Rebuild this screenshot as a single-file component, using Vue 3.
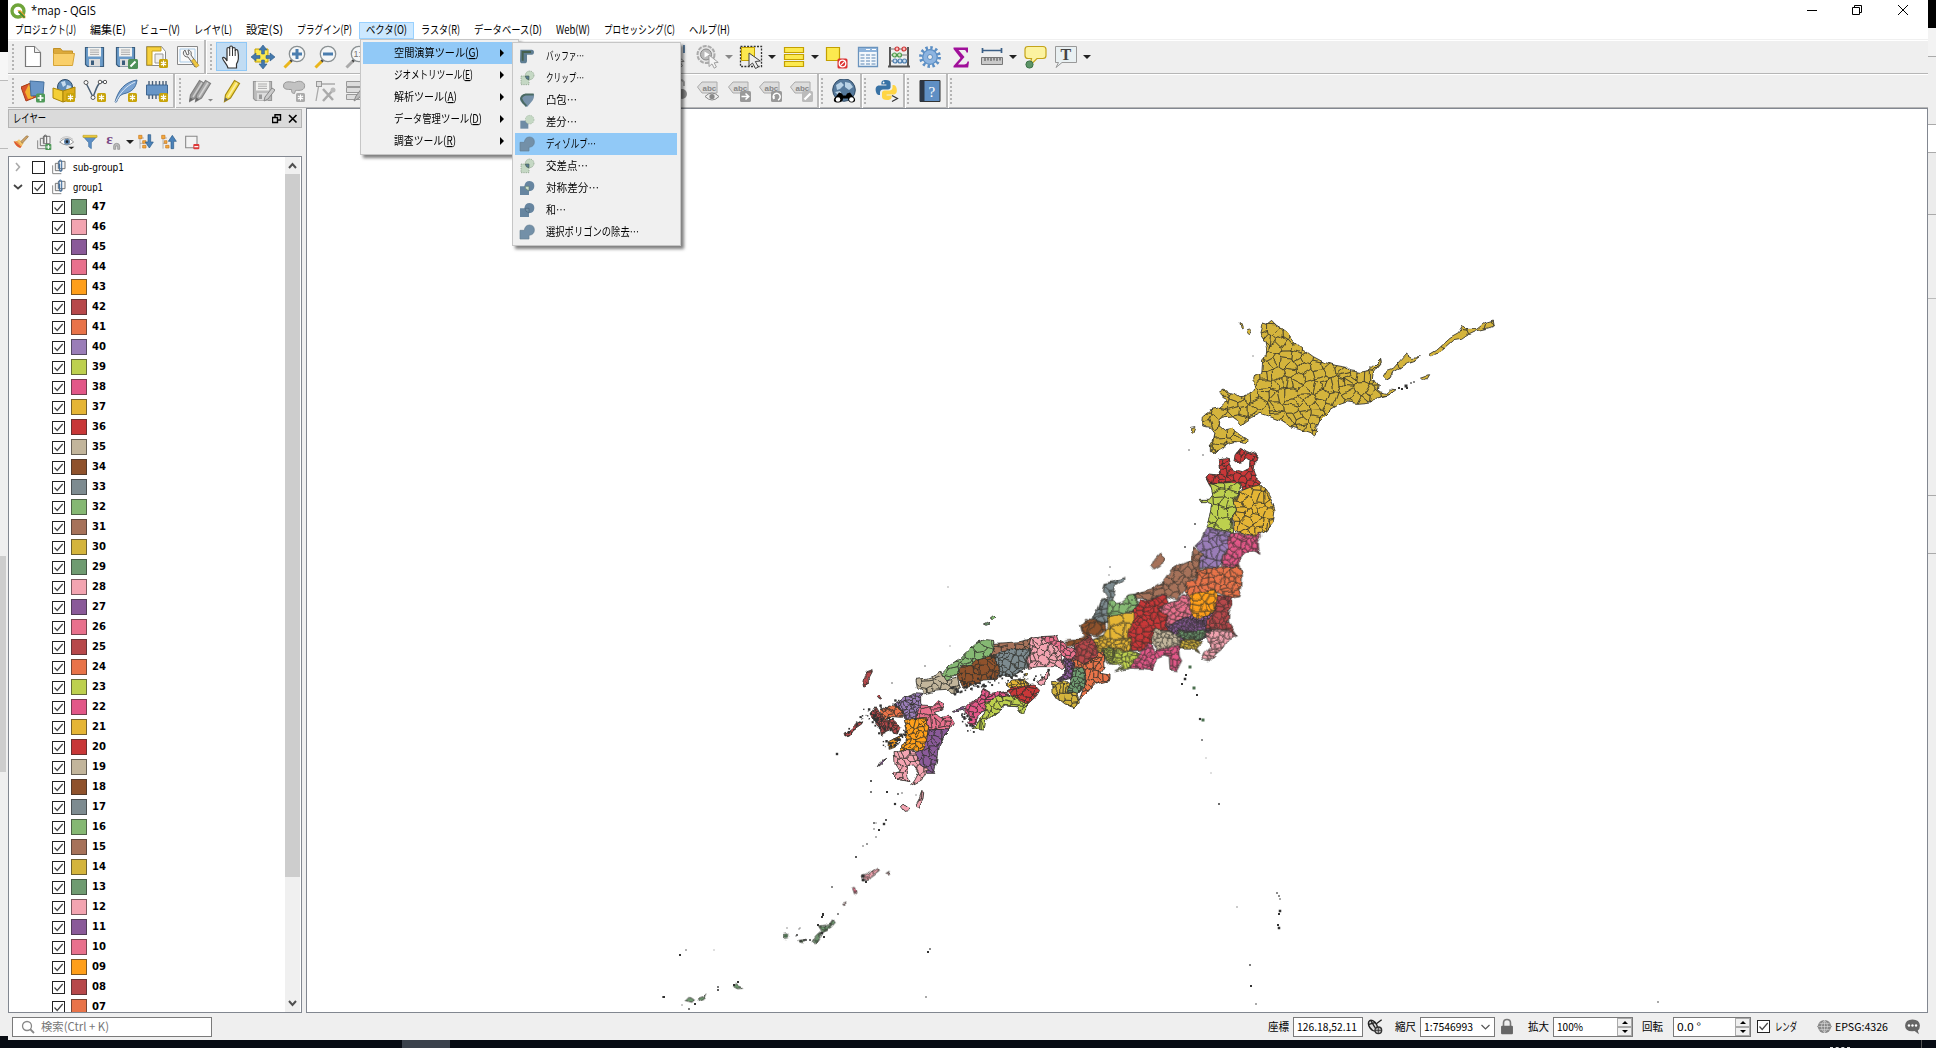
<script setup>
import { h } from 'vue'

const Txt = (p) => {
  const size = p.size || 12
  return h('svg', { width: p.w, height: 16, viewBox: `0 0 ${p.w} 16`, style: 'display:block;overflow:visible;flex:none' }, [
    h('text', {
      x: 0, y: p.y || 12, textLength: p.w, lengthAdjust: 'spacingAndGlyphs', 'font-size': size,
      'font-weight': p.weight || 400, fill: p.fill || '#000',
      'font-family': p.family || '"Noto Sans CJK JP", sans-serif',
    }, p.key2 ? [p.s + '(', h('tspan', { 'text-decoration': 'underline' }, p.key2), ')'] : p.s),
  ])
}
Txt.props = ['s', 'w', 'size', 'weight', 'fill', 'family', 'y', 'key2']

const menus = [
  ['プロジェクト(J)', 61], ['編集(E)', 36], ['ビュー(V)', 40], ['レイヤ(L)', 38], ['設定(S)', 37], ['プラグイン(P)', 55],
  ['ベクタ(O)', 41], ['ラスタ(R)', 39], ['データベース(D)', 68], ['Web(W)', 34], ['プロセッシング(C)', 71], ['ヘルプ(H)', 41],
]
const vectorMenu = [['空間演算ツール', 'G', 85], ['ジオメトリツール', 'E', 79], ['解析ツール', 'A', 63], ['データ管理ツール', 'D', 88], ['調査ツール', 'R', 62]]
const geoMenu = [
  ['バッファ…', 38, 'buffer'], ['クリップ…', 38, 'clip'], ['凸包…', 31, 'hull'], ['差分…', 31, 'diff'], ['ディゾルブ…', 50, 'dissolve'],
  ['交差点…', 42, 'clip'], ['対称差分…', 53, 'symdiff'], ['和…', 20, 'union'], ['選択ポリゴンの除去…', 93, 'dissolve'],
]

const star = '<rect x="14" y="14" width="9" height="9" rx="1.5" fill="#c8a40a"/><path d="M18.500 15.500v6M15.900 17l5.200 3M15.900 20l5.200-3" stroke="#fff" stroke-width="1.200"/>'
const gstar = '<rect x="14" y="14" width="9" height="9" rx="1.500" fill="#aaa"/><path d="M18.500 15.500v6M15.900 17l5.200 3M15.900 20l5.200-3" stroke="#fff" stroke-width="1.200"/>'
const lens = (c, i) => `<path d="M9 16 2.500 22.500" stroke="${c}" stroke-width="3"/><path d="M10.500 14.500 8.500 16.500" stroke="#444" stroke-width="2.500"/><circle cx="15" cy="9" r="7.700" fill="#f4f6f7" stroke="#8a9092" stroke-width="1.300"/>${i}`
const disk = (a, b) => `<path d="M2.500 2.500h18v19h-16l-2-2z" fill="${a}" stroke="${b}" stroke-width="1.200"/><rect x="5" y="2.500" width="13" height="9" fill="#f2f2f0"/><path d="M7 5h9M7 7.200h9M7 9.400h9" stroke="#aaa" stroke-width="1"/><rect x="6" y="14" width="11" height="7.500" fill="#ddd"/><rect x="8" y="15.500" width="3" height="4.500" fill="${b}"/>`
const tag = (x) => `<path d="M1.500 8 6 3h15v11H6z" fill="#ddd" stroke="#aaa"/><text x="6.500" y="11.500" font-size="8" font-weight="700" font-family="Liberation Sans, sans-serif" fill="#888">abc</text>${x}`
const cursor = (f, s) => `<path d="M10 9v11.500l3-2.600 2.200 4.300 2.200-1.200-2.200-4.200 4-.4z" fill="${f}" stroke="${s}" stroke-width=".9"/>`
const pen = (f, s) => `<path d="M4.500 22.500l1-6.500L14.500 1.500l5 3-9 14.500z" fill="${f}" stroke="${s}" stroke-width="1.200"/><path d="M4.500 22.500l.7-4 3 1.800z" fill="#666"/><path d="M17 3.500 8 18" stroke="#fff" stroke-opacity=".5" stroke-width="1.500"/>`
const sq = '<path d="M2 10h12v12H2z"'
const icons = {
  new: '<path d="M4.500 1.500h9l6 6v14h-15z" fill="#fff" stroke="#777" stroke-width="1.200"/><path d="M13.500 1.500v6h6" fill="#eee" stroke="#777"/>',
  open: '<path d="M1.500 3.500h7l2 2.500h10v4H1.500z" fill="#dca93a" stroke="#c08f25"/><path d="M1.500 20.500V8.500h21l-2 12z" fill="#f9cf6a" stroke="#d5a437"/>',
  save: disk('#6a9bc9', '#3b5d7d'),
  saveas: disk('#6a9bc9', '#3b5d7d') + '<rect x="14" y="14" width="10" height="10" rx="1.500" fill="#4e8f57"/><path d="M16.500 21.500l5-5" stroke="#fff" stroke-width="2"/>',
  layout: '<path d="M1.500 1.500h15l4 5v14h-19z" fill="#fff" stroke="#888"/><path d="M2 2h14v4H7v14H2z" fill="#f6d13e" stroke="#c9a31b"/><path d="M10 9h8v9h-8z" fill="#eee" stroke="#999"/>' + star,
  style: '<path d="M1.500 1.500h20v18h-20z" fill="#fafafa" stroke="#888"/><path d="M4 4h15v13H4z" fill="none" stroke="#a9cbe8"/><path d="M9 5c-3 2-2 7 3 7l7 10 3-2-7-10c1-3-1-5-3-5l1 4-2 1z" fill="#eee" stroke="#666"/><path d="M15.500 15.500l4.500 7 3-2-5-6.500z" fill="#f0c840" stroke="#b08a20" stroke-width=".6"/>',
  hand: '<path d="M8 23c-1-4-5-7-5.500-10 1-1.500 3 0 4.500 3V4c0-2 2.500-2 2.700 0V2.500c0-2 2.800-2 2.800 0V4c0-2 2.700-2 2.700 0v2c.3-2 2.700-1.600 2.700.3C19 12 18.500 16 16.500 19v4z" fill="#fff" stroke="#333" stroke-width="1.200"/><path d="M9.700 4v7M12.500 4v7M15.200 5.500V11" stroke="#333"/>',
  pansel: '<path d="M4 4h13v13H4z" fill="#fce94f" stroke="#c4a000"/><path d="M12 0l4 5h-2.600v4h-2.800V5H8zM12 24l4-5h-2.600v-4h-2.800v4H8zM0 12l5-4v2.600h4v2.800H5V16zM24 12l-5-4v2.600h-4v2.800h4V16z" fill="#4479ad" stroke="#2f5c88" stroke-width=".6"/>',
  zin: lens('#eab61c', '<path d="M15 4v10M10 9h10" stroke="#4a7dae" stroke-width="3"/>'),
  zout: lens('#eab61c', '<path d="M10 9h10" stroke="#4a7dae" stroke-width="3"/>'),
  znat: lens('#aaa', '<text x="9.500" y="12" font-size="9" font-family="Liberation Sans, sans-serif" fill="#777">1:</text>'),
  arrow: '<path d="M19 0v8" stroke="#2f5c88" stroke-width="1.500"/>' + cursor('#fff', '#777'),
  action: '<circle cx="10" cy="9.500" r="8.500" fill="#e6e6e6" stroke="#aaa" stroke-width="2" stroke-dasharray="4 1.200"/><circle cx="10" cy="9.500" r="5.500" fill="#bbb" stroke="#888"/><path d="M8.500 6.500v6l5-3z" fill="#fff"/><g transform="translate(3 1)">' + cursor('#f5f5f5', '#999') + '</g>',
  select: '<path d="M1.500 1.500h21v20h-21z" fill="none" stroke="#333" stroke-width="1.300" stroke-dasharray="2 1.300"/><path d="M2.500 2.500h13v13h-13z" fill="#fce94f" stroke="#c4a000"/><path d="M10 8v13l3.500-3 3 5.500 2.800-1.500-3-5.500 5-.5z" fill="#eee" stroke="#444"/>',
  selall: '<path d="M2.500 2.500h19v5h-19zM2.500 9.500h19v5h-19zM2.500 16.500h19v5h-19z" fill="#fce94f" stroke="#c4a000" stroke-width="1.200"/>',
  desel: '<path d="M1.500 2.500h13v13h-13z" fill="#fce94f" stroke="#c4a000" stroke-width="1.200"/><rect x="12.500" y="13.500" width="10" height="10" rx="1.500" fill="#dc3030"/><circle cx="17.500" cy="18.500" r="3.300" fill="none" stroke="#fff" stroke-width="1.300"/><path d="M15.300 20.700l4.400-4.400" stroke="#fff" stroke-width="1.200"/>',
  table: '<path d="M2.500 2.500h19v19h-19z" fill="#f4f8fc" stroke="#6a93bd" stroke-width="1.300"/><path d="M3 3h18v4H3z" fill="#8fb4db"/><path d="M4.500 10h4M4.500 13h4M4.500 16h4M4.500 19h4M10 10h4M10 13h4M10 16h4M10 19h4M15.500 10h4M15.500 13h4M15.500 16h4M15.500 19h4" stroke="#5a86b3" stroke-width="1.200"/><path d="M10 4.500h4M16 4.500h4" stroke="#fff"/>',
  abacus: '<path d="M3 2v19M21 2v19M1 21.500h22" stroke="#555" stroke-width="2"/><path d="M3 4h18M3 10h18M3 16h18" stroke="#777"/><g stroke-width="1.200"><circle cx="10" cy="4" r="2" fill="#fbb" stroke="#c33"/><circle cx="17" cy="4" r="2" fill="#fbb" stroke="#c33"/><circle cx="7.500" cy="10" r="2" fill="#cfe8c0" stroke="#4d9a4d"/><circle cx="12.500" cy="10" r="2" fill="#cfe8c0" stroke="#4d9a4d"/><circle cx="8" cy="16" r="2" fill="#cfe0f2" stroke="#4a7dae"/><circle cx="13" cy="16" r="2" fill="#cfe0f2" stroke="#4a7dae"/><circle cx="17.500" cy="16" r="2" fill="#cfe0f2" stroke="#4a7dae"/></g>',
  gear: '<circle cx="12" cy="12" r="9.200" fill="none" stroke="#5b8ec4" stroke-width="3.500" stroke-dasharray="2.400 2.417"/><circle cx="12" cy="12" r="7.300" fill="#8db4e0" stroke="#5b8ec4" stroke-width="1.300"/><circle cx="12" cy="12" r="2.500" fill="#efefef" stroke="#5b8ec4"/>',
  sigma: '<path d="M4.500 2.500h14.500v5h-1.500c-.5-2-1-2.500-3-2.500H9.500l6 7-6.500 7.500h6c2 0 3-.8 3.500-3h1.500l-.8 6H4.500v-1.500L11.500 13 4.500 4z" fill="#a0109a"/>',
  measure: '<path d="M2.500 3v5M21.500 3v5M2 5.500h20" stroke="#3b5f86" stroke-width="1.700"/><path d="M1.500 12.500h21v7h-21z" fill="#c9c9c9" stroke="#777"/><path d="M5 13v3M8 13v2.500M11 13v3M14 13v2.500M17 13v3M20 13v2.500" stroke="#444"/>',
  tip: '<path d="M5 1.500h15q3 0 3 3v6q0 3-3 3h-6l-7 7 1.500-7H5q-3 0-3-3v-6q0-3 3-3z" fill="#fcf3a0" stroke="#c4a41a" stroke-width="1.200"/><circle cx="6.500" cy="19.500" r="3.600" fill="#5c9467" stroke="#3f7348"/>',
  ttext: '<path d="M1.500 1.500h21v16H8l-6 5 2.500-5h-3z" fill="#e9f0f2" stroke="#999"/><text x="6.500" y="15" font-size="16" font-weight="700" font-family="Liberation Serif, serif" fill="#444">T</text>',
  addlayer: '<path d="M1 8l11-5 6 11-11 6z" fill="#f2c230" stroke="#b98a12"/><path d="M0 8l10-4 5 14-10 4z" fill="#d9542c" stroke="#a93c1b"/><path d="M4 13l4-8 4 14-5 1z" fill="#f2b030"/><path d="M9 2l14 1-1 13-12 1z" fill="#6a96c8" stroke="#44709e"/><rect x="15" y="14.500" width="9" height="9" rx="1.500" fill="#4f9a59"/><path d="M19.500 16v6M16.500 19h6" stroke="#fff" stroke-width="1.700"/>',
  geopkg: '<circle cx="13" cy="8" r="7.500" fill="#5f8cb8" stroke="#2e4c6b"/><path d="M9 3l4-1 1 4-3 2zM15 6l4 1-1 4-4-1z" fill="#c8dcee"/><path d="M1 9l10 3v11L1 19z" fill="#f4cf37" stroke="#a98508"/><path d="M11 12l12-4v11l-12 4z" fill="#ddae1c" stroke="#a98508"/>' + star,
  shp: '<path d="M3 4l7 14c3-7 4-13 8-15h3" fill="none" stroke="#4a6076" stroke-width="1.500"/><circle cx="3" cy="3.500" r="2" fill="#fff" stroke="#555"/><circle cx="10" cy="18.500" r="2" fill="#fff" stroke="#555"/><circle cx="17" cy="3" r="1.800" fill="#fff" stroke="#555"/><circle cx="22" cy="3" r="1.700" fill="#fff" stroke="#555"/>' + star,
  feather: '<path d="M1 23C4 12 10 3 23 1c-1 8-5 12-14 14-3 1-5 4-6.500 8z" fill="#7aa3d2" stroke="#456f9d"/><path d="M1.500 23C6 14 12 7 21 3" stroke="#dbe8f5" fill="none"/>' + star,
  chip: '<path d="M4 2v18M7.500 2v18M11 2v18M14.500 2v18M18 2v18M21 2v18" stroke="#4a5f77" stroke-width="1.400"/><path d="M1.500 6h21v10h-21z" fill="#6795c6" stroke="#3f6691"/>' + star,
  pens: '<g transform="translate(-4 0)">' + pen('#999', '#808080') + '</g><g transform="translate(2 0)">' + pen('#a8a8a8', '#808080') + '</g><path d="M19 20h5l-2.500 2.500z" fill="#888"/>',
  pen: pen('#f6dc4a', '#a68a12'),
  saveed: disk('#bcbcbc', '#999') + '<path d="M13 22l1-4 7-9 3 2-7 9z" fill="#ccc" stroke="#888"/>',
  blob: '<path d="M1.500 7c0-6 8-4 11-3.500 6-3 11 0 10 4.500s-7 3-9 3.500l-1 3c-3 0-3-2-3-4-4 0-8 0-8-3.500z" fill="#c2c2c2" stroke="#999"/>' + gstar,
  vertex: '<path d="M3 22 6 5h16" fill="none" stroke="#aaa" stroke-width="1.300"/><rect x="3.500" y="2.500" width="5" height="5" fill="#ddd" stroke="#999"/><path d="M10 10l10 11M21 10l-11 12" stroke="#aaa" stroke-width="2.500"/><circle cx="20" cy="11" r="2.500" fill="#bbb"/>',
  attr: '<path d="M2.500 2.500h17v5h-17zM2.500 8.500h17v5h-17zM2.500 15.500h17v5h-17z" fill="#ddd" stroke="#999"/><path d="M10 22l2-5 9-12 3 2-9 12z" fill="#bbb" stroke="#888"/>',
  lock2: '<path d="M13 5v-2q3-4 6 0v4" fill="none" stroke="#aaa" stroke-width="2"/><circle cx="17" cy="15" r="5" fill="#888"/>',
  tageye: tag('<path d="M9 17.500q7-7 14 0-7 7-14 0z" fill="#eee" stroke="#888"/><circle cx="16" cy="17.500" r="2.600" fill="#888"/>'),
  tagarr: tag('<rect x="13" y="12" width="11" height="11" rx="1.500" fill="#999"/><path d="M14.500 17.500h7M18.500 14.500l3.200 3-3.200 3" stroke="#fff" stroke-width="1.600" fill="none"/>'),
  tagrot: tag('<rect x="13" y="12" width="11" height="11" rx="1.500" fill="#999"/><path d="M16 20a3.500 3.500 0 1 1 4 1M16 20v-3" stroke="#fff" stroke-width="1.500" fill="none"/>'),
  tagpen: tag('<rect x="13" y="12" width="11" height="11" rx="1.500" fill="#bbb"/><path d="M15.500 20.500l6-6" stroke="#fff" stroke-width="2.300"/>'),
  search: '<circle cx="12" cy="11" r="11.300" fill="#55799c" stroke="#334d66"/><path d="M4 6l5-3 3 3-4 4-3 1zM13 3l5 1 3 4-4 3-4-3zM3 13l5-1 2 3-3 2z" fill="#b9d2e6"/><path d="M5 23.500c-4 0-4-4-1-6l3-4 3 1 1 2h3l1-2 3-1 3 4c3 2 3 6-1 6-3 0-4-2-4-4h-5c0 2-1 4-6 4z" fill="#000"/><circle cx="6" cy="20.500" r="2.300" fill="#fff"/><circle cx="19.500" cy="20.500" r="2.300" fill="#fff"/>',
  python: '<path d="M11 1c-5 0-4.600 2.200-4.600 4.500h5v1H4.500C1 6.500 0 9 1 13c.6 2.500 2 3 4 3v-2.500c0-2 1.500-3 3-3h5c1.500 0 2.600-1 2.600-2.500V4C15.600 2 14 1 11 1z" fill="#3872a5"/><circle cx="8.600" cy="3.500" r=".9" fill="#fff"/><path d="M12 21c5 0 4.600-2.200 4.600-4.500h-5v-.9H18c3.500 0 4.500-2.500 3.500-6.500-.6-2.500-2-3-4-3v2.500c0 2-1.500 3-3 3h-5C8 11.600 7 12.600 7 14v4c0 2 2 3 5 3z" fill="#ffd545"/><path d="M17 16.500l5.500 3-5.500 3" fill="none" stroke="#333" stroke-width="1.200"/>',
  help: '<path d="M2 1.500h20v21H2z" fill="#5f8fc4" stroke="#333"/><path d="M2 1.500h4.500v21H2z" fill="#2c3746"/><text x="10.500" y="17.500" font-size="15" font-family="Liberation Serif, serif" fill="#fff">?</text>',
  buffer: '<path d="M2 2.500h17q3.500 0 3.500 4T19 10h-7v9q0 4-4 4H5q-3.500 0-3.500-4z" fill="#5f7e93"/><path d="M5.500 19V6H18" fill="none" stroke="#46604e" stroke-width="3"/>',
  clip: '<path d="M3 9h12v13H3z" fill="#c5d8c4" stroke="#7d947d" stroke-dasharray="2 1.500"/><circle cx="16" cy="8" r="6.500" fill="#c5d8c4" stroke="#7d947d" stroke-dasharray="2 1.500"/><path d="M9.500 9H15v5.500q-5 0-5.500-5.500z" fill="#5a7b95" stroke="#4a6555"/>',
  hull: '<path d="M9 3h13.500q1 7-4 12l-6 7q-3 1-4-2Q1 14 1.500 10 3 4 9 3z" fill="#7792aa"/><path d="M22 3.800H10Q4 5 3.200 10q2 6 8 11" fill="none" stroke="#4b6a62" stroke-width="3"/>',
  diff: sq + ' fill="#6e8ca5"/><circle cx="16" cy="8.500" r="6.500" fill="#c5d8c4" stroke="#9cb29c" stroke-dasharray="2 1.500"/>',
  dissolve: '<path d="M1.500 9.500H8q1-8 8-8 7 .5 7 7.500t-8 8v5.500H1.500z" fill="#7390a8" stroke="#657f93"/>',
  symdiff: '<path d="M1.500 9.500H8q1-8 8-8 7 .5 7 7.500t-8 8v5.500H1.500z" fill="#6685a0"/><path d="M9 9.500h6V16q-6-1-6-6.500z" fill="#cfe0cc" stroke="#5a7a70"/>',
  union: '<path d="M1.500 9.500H8q1-8 8-8 7 .5 7 7.500t-8 8v5.500H1.500z" fill="#6685a0"/><path d="M9 9.500h6V16q-6-1-6-6.500z" fill="#7392a8" stroke="#48657b"/>',
  brush: '<path d="M1 11c4 1 6-1 8-3l7 6-5 7C6 20 3 16 1 11z" fill="#f3c66c"/><path d="M1 11c2 1 4 1 5 0l7 7-2 3C6 20 3 16 1 11z" fill="#dc5a34"/><path d="M4 11l8 7" stroke="#f5c050" stroke-width="1.500"/><path d="M12 11l8-8q2-1 3 1l-9 10z" fill="#d0a468" stroke="#8a6a3a"/>',
  group: '<path d="M2.500 9.500V22h13" fill="none" stroke="#888" stroke-width="1.500"/><path d="M6.500 6.500h10v11h-10z" fill="#eee" stroke="#777" stroke-width="1.500"/><path d="M11 3.500h10v11H11z" fill="#f4f4f4" stroke="#777" stroke-width="1.500"/><path d="M12 14V4q2-5 4 0v13q-1 3-3 0V7" fill="none" stroke="#44709e" stroke-width="1.600"/>',
  addgroup: '<path d="M2.500 9.500V22h13" fill="none" stroke="#888" stroke-width="1.500"/><path d="M6.500 6.500h10v11h-10z" fill="#eee" stroke="#777" stroke-width="1.500"/><path d="M11 3.500h10v11H11z" fill="#f4f4f4" stroke="#777" stroke-width="1.500"/><path d="M12 14V4q2-5 4 0v13" fill="none" stroke="#666" stroke-width="1.600"/><rect x="14" y="15" width="9" height="9" rx="1" fill="#4f9a59"/><path d="M18.500 16.500v6M15.500 19.500h6" stroke="#fff" stroke-width="1.600"/>',
  eye: '<path d="M1 12q11-11 21 0-10 9-21 0z" fill="#fff" stroke="#888" stroke-width="1.300"/><circle cx="12" cy="11.500" r="4.500" fill="#5d84ad"/><circle cx="12" cy="11.500" r="2" fill="#222"/><path d="M2 8q9-8 19 0" fill="none" stroke="#aaa"/><path d="M14 19h9l-4.500 4z" fill="#222"/>',
  funnel: '<path d="M2 4h20l-8 9v9l-4-3v-6z" fill="#5d8fc6" stroke="#40719f"/><path d="M1.500 2h21v3h-21z" fill="#f2cf3c" stroke="#c0a020"/>',
  eps: '<text x="2" y="15" font-size="23" font-family="Liberation Serif, serif" font-weight="700" fill="#7b4a86">ε</text><path d="M13 23v-5q0-4 4.500-4t4.500 4v5h-3v-5h-3v5z" fill="#bbb" stroke="#888"/>',
  expand: '<path d="M3 2v20M3 6h6M3 14h6" stroke="#999"/><path d="M1 2h5v5H1zM7 10h5v4H7zM7 17h5v4H7z" fill="#f5a93c" stroke="#c87820"/><path d="M15 1h4v11h4l-6 9-6-9h4z" fill="#4a82ba" stroke="#2b5a88"/>',
  collapse: '<path d="M3 2v20M3 6h6M3 14h6" stroke="#999"/><path d="M1 2h5v5H1zM5 10h4v4H5zM7 17h5v4H7z" fill="#f5a93c" stroke="#c87820"/><path d="M15 22h4V11h4l-6-9-6 9h4z" fill="#4a82ba" stroke="#2b5a88"/>',
  remove: '<path d="M2.500 3.500h17v17h-17z" fill="#f3f3f3" stroke="#888" stroke-width="1.600"/><rect x="14" y="15" width="9" height="8" rx="1.500" fill="#dc3a3a"/><path d="M15.500 19h6" stroke="#fff" stroke-width="1.800"/>',
  mouse: '<ellipse cx="9" cy="10" rx="5.500" ry="9" transform="rotate(-35 9 10)" fill="#ddd" stroke="#222" stroke-width="2.200"/><path d="M3 8l10-3M6 3l6 10M14 7l8-6" stroke="#222" stroke-width="2"/><circle cx="17" cy="17" r="5" fill="#bbb" stroke="#333" stroke-width="2"/><path d="M12 17h10M17 12v10" stroke="#333" stroke-width="1.300"/>',
  lock: '<path d="M7 12V7q0-5 5-5t5 5v5" fill="none" stroke="#777" stroke-width="2.300"/><rect x="3.500" y="11" width="17" height="12" rx="1.500" fill="#666"/>',
  globe: '<path d="M0 12 8 4h8l8 8-8 8H8z" fill="#888"/><circle cx="12" cy="12" r="10.500" fill="#888"/><path d="M2 12h20M12 2v20M4 7h16M4 17h16M12 2q-10 10 0 20M12 2q10 10 0 20" stroke="#ddd" fill="none"/>',
  bubble: '<path d="M12 2q10 0 10.500 8.500 0 5-3 7L21 23l-6-4.500Q1.500 20 1.500 10.500 2 2 12 2z" fill="#666"/><circle cx="7" cy="10.500" r="1.700" fill="#fff"/><circle cx="12" cy="10.500" r="1.700" fill="#fff"/><circle cx="17" cy="10.500" r="1.700" fill="#fff"/>',
}

const row1 = ['|0', 'new', 'open', 'save', 'saveas', 'layout', 'style', '|1', '*hand', 'pansel', 'zin', 'zout', 'znat', '_290', 'arrow', 'action', 'vg', 'select', 'v', 'selall', 'v', 'desel', 'table', 'abacus', 'gear', 'sigma', 'measure', 'v', 'tip', 'ttext', 'v']
const row2 = ['|0', 'addlayer', 'geopkg', 'shp', 'feather', 'chip', '|3', 'pens', 'pen', 'saveed', 'blob', 'vertex', 'attr', '_290', 'lock2', 'tageye', 'tagarr', 'tagrot', 'tagpen', '|2', 'search', '|2', 'python', '|2', 'help', '|2']
const bars = [row1, row2]
const panelIcons = ['brush', 'addgroup', 'eye', 'funnel', 'eps', 'v', 'expand', 'collapse', 'remove']

const C = {
  gr: '#6f9b71', pk: '#f3a4b1', pu: '#8a5a99', ro: '#e8718d', or: '#ff9f1a', dr: '#b7484b', eo: '#e87349', la: '#9a7db8', li: '#bdd04e',
  mg: '#e25788', ye: '#e5b535', re: '#c83738', ta: '#c2b59b', br: '#8f522c', sl: '#7d8b90', lg: '#85b873', bn: '#a6725a', go: '#d4b43c',
}
const order = 'gr pk pu ro or dr eo la li mg ye re ta br sl lg bn go gr pk pu ro dr eo li mg ye re ta br sl lg bn go gr pk pu ro or dr eo'.split(' ')
const layers = order.map((k, i) => ({ n: String(47 - i).padStart(2, '0'), c: C[k] }))

/* Map sheets: origin plus regions as [colour, municipality spacing, outline] in third-pixel units. */
const sheets = [
  { o: [1160, 300], r: [
    ['go', 22, '300,95 306,72 320,76 335,64 345,75 360,84 385,102 400,122 430,148 460,170 490,186 520,195 560,202 570,212 600,217 625,212 645,195 662,178 664,188 650,205 636,225 634,240 650,250 655,258 652,270 662,276 680,280 692,270 705,272 690,284 665,290 645,295 635,305 615,308 590,310 560,306 535,315 510,330 490,350 478,362 468,385 466,400 460,408 450,398 420,388 390,380 362,362 330,350 300,340 275,352 258,362 242,374 235,362 215,348 195,350 180,362 178,378 195,392 215,388 240,405 262,420 250,430 225,425 200,432 190,445 165,458 148,452 148,435 160,425 165,400 150,382 128,378 130,345 150,330 172,325 188,312 200,300 185,292 180,280 195,270 210,278 225,280 240,290 262,288 280,275 290,255 278,240 282,228 305,222 308,180 318,168 320,150 315,125 302,105'],
    ['go', 60, '670,228 680,212 700,205 720,182 738,162 755,172 778,170 765,180 742,188 715,206 690,222 682,240'],
    ['go', 50, '810,160 830,148 850,130 870,112 895,98 908,76 918,88 950,88 975,68 1000,60 1003,78 985,84 950,92 925,104 905,118 880,122 860,140 840,156 815,168'],
    ['go', 90, '783,232 800,226 812,224 805,236 788,238'], ['go', 90, '240,68 246,70 250,82 244,88'], ['go', 90, '258,94 268,90 276,97 268,104'], ['go', 90, '92,382 105,380 98,398 92,395'],
    ['re', 15, '178,480 195,476 208,480 212,500 222,515 232,508 248,512 268,502 270,480 262,474 245,482 222,486 225,465 238,448 252,455 272,464 290,458 286,480 282,510 290,535 305,548 300,556 275,560 250,570 240,552 215,550 190,552 148,555 138,535 150,522 175,525 182,505'],
    ['ye', 20, '240,575 250,570 275,560 302,555 320,572 330,590 345,632 340,665 320,690 300,700 288,712 265,708 245,698 222,690 217,650 230,630 222,605 232,590'],
    ['li', 22, '148,552 190,552 215,550 243,552 240,572 230,590 222,605 230,632 215,650 218,698 200,700 185,692 165,688 138,680 148,650 155,612 138,605 122,605 118,598 148,598 158,585 155,570'],
  ] },
  { o: [1040, 440], r: [
    ['pu', 9, '388,525 440,500 535,470 560,560 495,598 420,600 355,570'],
    ['re', 14, '270,520 300,488 350,500 360,560 345,600 300,630 272,628'],
    ['eo', 12, '95,655 165,635 185,680 130,740 98,735'],
    ['sl', 16, '185,480 210,478 215,540 190,555 160,545'],
    ['la', 16, '500,262 525,268 545,275 568,280 565,300 568,325 552,345 545,370 530,390 500,385 475,380 480,355 492,340 465,315 485,295'],
    ['mg', 13, '568,280 600,278 625,290 648,290 662,275 664,290 655,305 655,320 660,340 645,330 620,335 600,350 598,378 575,378 545,380 552,350 568,325 562,305'],
    ['bn', 19, '460,320 490,340 478,360 478,385 465,410 440,430 432,450 410,480 385,470 360,462 330,478 290,478 292,462 330,450 370,425 395,390 420,375 455,360'],
    ['bn', 99, '335,375 345,355 362,336 365,352 372,356 365,375 345,387'],
    ['eo', 16, '475,385 500,388 530,388 545,382 600,378 607,405 605,440 600,470 575,474 550,464 520,454 490,457 450,472 435,450 440,428 465,415'],
    ['or', 15, '448,470 490,455 520,452 534,465 534,490 522,515 500,527 480,537 455,522 443,500'],
    ['ro', 13, '358,505 385,490 410,482 432,460 450,472 447,500 457,520 440,535 410,544 390,560 376,550 378,530'],
    ['dr', 12, '531,465 575,470 578,490 568,515 565,545 592,588 560,572 525,572 493,567 498,545 518,525 530,500'],
    ['re', 14, '300,485 330,478 362,464 378,465 385,490 358,505 380,530 378,552 385,568 345,570 335,590 335,610 300,630 275,632 270,605 255,585 270,560 280,530 278,510'],
    ['pu', 8, '388,558 410,542 440,535 470,540 490,550 495,572 470,580 430,572 395,575'],
    ['gr', 8, '410,572 440,576 495,572 498,595 470,598 440,592 415,590'],
    ['go', 9, '412,628 425,600 445,592 470,598 488,605 470,625 480,640 462,630 435,630'],
    ['pk', 12, '495,575 530,570 565,570 592,586 560,600 548,625 530,640 505,665 486,660 495,640 515,620 505,600'],
    ['ta', 13, '335,590 345,568 385,570 400,578 425,595 415,625 395,622 370,628 352,635 342,615'],
    ['mg', 13, '268,685 285,660 300,635 330,605 345,640 365,625 390,620 415,620 418,650 425,662 410,692 390,690 388,650 372,645 350,655 340,690 310,685'],
    ['li', 12, '195,640 230,628 265,628 298,640 290,655 268,685 225,695 245,685 235,675 205,670 190,650'],
    ['ye', 26, '200,530 240,518 280,520 280,540 265,570 262,590 275,600 200,600 190,585 205,560'],
    ['ye', 10, '190,585 200,596 273,596 275,610 270,632 230,632 205,640 180,638 155,615 160,595'],
    ['li', 6, '188,628 205,620 222,625 228,645 212,672 195,660'],
    ['lg', 20, '200,482 212,472 225,488 245,485 265,468 290,465 292,490 275,515 240,520 200,528'],
    ['sl', 18, '190,450 195,430 220,425 250,412 252,422 225,440 222,465 205,485 200,530 205,550 180,548 150,542 170,520 190,495 203,480 200,465'],
    ['br', 20, '122,555 140,535 165,542 195,550 198,570 175,587 150,585 140,600 120,615 100,620 80,610 75,603 110,600 135,588 125,572'],
    ['dr', 13, '103,620 125,600 150,585 160,600 175,635 160,657 130,672 106,657'],
    ['eo', 14, '160,655 178,635 190,640 192,680 180,700 210,705 210,722 185,728 160,735 140,760 118,780 130,745 140,720 128,690 130,672'],
    ['gr', 11, '95,685 125,682 137,710 134,740 112,764 85,755 90,730 88,700'],
    ['go', 14, '35,725 70,722 90,732 85,755 110,762 118,785 105,803 75,795 50,775 36,755'],
    ['pu', 7, '70,660 85,655 105,670 100,690 90,715 60,722 50,716 75,700 72,680'],
  ] },
  { o: [820, 600], r: [
    ['pk', 16, '620,180 625,155 635,115 665,110 680,125 700,130 720,150 725,180 735,200 725,205 700,200 660,200 625,205'],
    ['pk', 30, '650,245 668,232 688,212 692,222 672,250 660,250'],
    ['ro', 13, '660,110 700,108 712,103 718,120 738,130 750,140 768,150 768,180 742,180 720,160 700,135 680,130'],
    ['bn', 18, '510,165 525,130 560,128 600,125 635,116 628,152 600,155 575,145 540,150 525,168'],
    ['sl', 15, '528,168 545,150 575,146 600,155 628,152 620,180 622,200 600,215 575,230 540,228 535,200 525,185'],
    ['br', 18, '405,215 430,198 455,192 475,175 500,166 528,168 530,190 538,220 528,238 490,240 455,255 430,262 412,240'],
    ['lg', 21, '365,222 390,195 420,175 440,155 470,130 500,122 525,125 512,165 475,178 455,192 420,200 405,225 380,240 370,235'],
    ['ta', 19, '288,238 320,235 350,225 362,210 380,240 408,232 418,265 405,285 380,268 350,270 310,278 292,265'],
    ['la', 10, '220,318 245,300 255,290 285,278 305,280 305,310 315,320 295,332 285,358 260,362 245,345 248,330'],
    ['eo', 13, '178,330 205,318 225,322 248,330 245,352 215,350 200,362 180,345'],
    ['dr', 10, '150,345 165,320 180,345 200,360 220,362 242,385 235,402 220,400 215,385 195,392 185,408 180,385 168,370'],
    ['ro', 17, '290,335 310,315 340,318 355,302 372,312 365,330 345,338 362,350 385,345 400,370 390,390 350,388 325,387 320,355 288,362'],
    ['or', 13, '250,360 290,355 320,352 326,385 322,420 307,455 270,452 240,450 255,425 260,400'],
    ['or', 18, '205,425 225,415 245,405 235,420 222,440 204,445'],
    ['pu', 17, '325,385 350,388 390,390 370,410 355,440 350,480 342,520 320,520 300,490 280,460 305,450 320,420'],
    ['pk', 16, '222,455 250,450 282,455 300,485 322,510 308,540 272,558 285,540 295,520 280,500 262,500 262,520 270,545 240,540 220,520 240,515 225,490'],
    ['mg', 13, '435,325 450,310 475,290 490,265 515,280 555,272 565,288 530,295 500,310 495,330 475,340 465,360 458,375 442,365 450,345 435,335'],
    ['ye', 13, '558,255 580,240 610,238 628,252 600,262 575,268'],
    ['re', 15, '560,272 580,264 610,256 640,252 660,272 650,290 620,318 600,300 575,290'],
    ['li', 15, '460,388 465,370 490,340 500,310 530,292 560,285 595,295 620,316 610,345 590,320 555,318 520,345 500,360 495,390'],
    ['dr', 25, '126,262 130,240 142,225 138,212 155,206 157,215 148,232 148,248 135,264'],
    ['dr', 30, '172,292 180,286 186,294 178,299'], ['dr', 14, '72,400 85,392 100,380 128,365 125,375 100,392 92,405 75,408'],
    ['pu', 20, '400,335 430,322 435,326 405,337'], ['lg', 90, '512,52 522,48 530,56 520,63 513,60'], ['gr', 90, '490,72 500,67 508,72 498,76'],
    ['pk', 90, '243,622 250,614 258,613 270,622 266,632 252,634'], ['pk', 25, '289,612 298,596 304,578 311,580 309,596 300,614 298,622 290,620'], ['pu', 90, '175,500 182,488 200,478 190,488'],
    ['go', 90, '608,226 625,220 620,230'],
  ] },
  { o: [660, 780], r: [
    ['pk', 12, '604,290 625,280 655,262 658,268 632,288 620,300 608,302'], ['ro', 20, '578,325 586,322 591,335 584,342'], ['pk', 90, '545,370 558,366 550,374'], ['pk', 90, '678,280 688,274 684,282'],
    ['gr', 12, '505,440 520,420 526,430 512,445 495,455 482,462 472,480 466,492 460,482 470,465 485,452 476,438 495,436'],
    ['gr', 90, '222,612 230,610 248,624 232,626'], ['gr', 90, '78,664 90,652 103,660 96,670'], ['gr', 90, '115,655 130,650 140,638 132,658 120,664'], ['gr', 90, '370,467 380,465 386,470 376,472'], ['gr', 12, '418,482 430,480 442,482 425,488'],
  ] },
]
let seed = 11
const rnd = () => { seed = (seed * 1664525 + 1013904223) >>> 0; return seed / 4294967296 }
const clipHalf = (poly, a, b) => {
  const mx = (a[0] + b[0]) / 2, my = (a[1] + b[1]) / 2, nx = b[0] - a[0], ny = b[1] - a[1]
  const side = (p) => (p[0] - mx) * nx + (p[1] - my) * ny
  const out = []
  poly.forEach((p, i) => {
    const q = poly[(i + 1) % poly.length], sp = side(p), sq2 = side(q)
    if (sp <= 0) out.push(p)
    if ((sp < 0 && sq2 > 0) || (sp > 0 && sq2 < 0)) { const t = sp / (sp - sq2); out.push([p[0] + (q[0] - p[0]) * t, p[1] + (q[1] - p[1]) * t]) }
  })
  return out
}
const cells = (outline, spacing) => {
  if (spacing > 80) return ''
  const s = spacing * 1.2
  const pts = outline.split(' ').map((p) => p.split(',').map(Number))
  const xs = pts.map((p) => p[0]), ys = pts.map((p) => p[1])
  const seeds = []
  for (let x = Math.min(...xs) - s; x < Math.max(...xs) + s; x += s) for (let y = Math.min(...ys) - s; y < Math.max(...ys) + s; y += s) seeds.push([x + rnd() * s * 1.3, y + rnd() * s * 1.3])
  let d = ''
  seeds.forEach((a) => {
    let poly = [[a[0] - 2 * s, a[1] - 2 * s], [a[0] + 2 * s, a[1] - 2 * s], [a[0] + 2 * s, a[1] + 2 * s], [a[0] - 2 * s, a[1] + 2 * s]]
    seeds.forEach((b) => { if (a !== b && Math.abs(a[0] - b[0]) < 4 * s && Math.abs(a[1] - b[1]) < 4 * s) poly = clipHalf(poly, a, b) })
    if (poly.length) d += 'M' + poly.map((p) => p[0].toFixed(1) + ' ' + p[1].toFixed(1)).join('L') + 'Z'
  })
  return d
}
const regions = sheets.map((sh, i) => ({
  t: `translate(${sh.o[0]} ${sh.o[1]}) scale(.33333)`,
  list: sh.r.map((r, j) => ({ id: `r${i}-${j}`, c: C[r[0]], p: r[2], d: cells(r[2], r[1]) })),
}))

/* Tiny islets: [x, y, size] in page pixels. */
const isl = [
  [1253, 356, 1], [1189, 450, 1.2], [1203, 455, 1.2], [1195, 524, 1.6], [1185, 547, 1.6], [1110, 567, 1.2], [1109, 575, 1], [1399, 388, 2], [1402, 389, 2], [1406, 386, 3], [1407, 388, 2], [1411, 383, 1.5], [1414, 382, 1.5],
  [1190, 667, 3, 1], [1186, 675, 2], [1185, 679, 2.5], [1182, 684, 2], [1194, 688, 3, 1], [1197, 695, 2], [1200, 719, 2.2], [1203, 720, 3, 1], [1202, 740, 1.5], [1219, 804, 1.7], [1206, 758, .8], [1211, 773, .8],
  [1277, 893, 1.5], [1279, 896, 1.5], [1280, 899, 1.3], [1280, 911, 2.5], [1279, 914, 2], [1278, 925, 2], [1279, 928, 2.5], [1237, 907, 1], [1250, 965, 1.6], [1251, 986, 2], [1256, 1004, 1.3], [1658, 1002, 1.3],
  [948, 587, .9], [925, 666, 1.2], [892, 683, 1.2], [837, 754, 2.4], [871, 781, 1.8], [871, 792, 1.6], [887, 792, 2], [898, 794, 1.6], [902, 793, 1.2], [895, 804, 2.2], [916, 795, 1], [1132, 600, 1.2], [950, 646, .9],
  [874, 823, 1.6], [876, 823, 1], [886, 820, 1.8], [884, 824, 2.4], [879, 830, 2], [874, 829, 1.2], [876, 837, 1.2], [863, 846, 1.2], [867, 844, 1.4], [856, 857, 1.8], [832, 887, 1.5], [838, 914, 1.5], [823, 914, 2], [822, 917, 2],
  [863, 876, 3], [863, 880, 2.5], [866, 882, 2], [799, 929, 1], [800, 928, 1], [796, 936, 1], [787, 928, 1], [810, 940, 1.7], [806, 940, 1.6], [804, 940, 1.6], [801, 941, 1.6], [797, 935, 1.7], [824, 937, 2], [823, 915, 2], [822, 933, 2.4], [818, 925, 2], [786, 936, 3, 1], [680, 955, 2], [686, 950, 1.2], [714, 950, .8], [718, 987, 1.6], [718, 990, 1.8], [734, 985, 2], [738, 982, 2], [664, 997, 2], [695, 1004, 2], [689, 1009, 1.6], [682, 1005, 1], [663, 997, 1.6], [928, 952, 2], [930, 949, 1.5], [926, 997, 1.3],
]
const scatter = (x0, y0, x1, y1, w, n) => { for (let i = 0; i < n; i++) { const t = rnd(); isl.push([x0 + (x1 - x0) * t + (rnd() - .5) * w, y0 + (y1 - y0) * t + (rnd() - .5) * w, .7 + rnd() * 1.8]) } }
scatter(950, 692, 990, 680, 9, 50); scatter(990, 680, 1026, 675, 9, 28); scatter(850, 732, 862, 718, 5, 14); scatter(868, 714, 888, 728, 16, 60)
scatter(960, 712, 972, 730, 8, 26); scatter(882, 745, 905, 735, 7, 16); scatter(880, 708, 900, 702, 7, 14); scatter(892, 746, 906, 732, 6, 18); scatter(1030, 680, 1052, 670, 5, 7)
</script>

<template>
  <div class="desk">
    <div class="edge left"><i class="blk"></i><i class="a"></i><i class="b"></i><i class="thumb"></i><i class="c"></i></div>
    <div class="win">
      <div class="title">
        <svg class="logo" width="16" height="16" viewBox="0 0 24 24"><circle cx="12" cy="12" r="9" fill="none" stroke="#6fa53a" stroke-width="5"/><path d="M11 11h5l7 8v4h-4z" fill="#f0a030"/><path d="M13 13l9 9" stroke="#3f8f2f" stroke-width="3"/></svg>
        <Txt s="*map - QGIS" :w="65" :size="12" family='"Open Sans", sans-serif' />
        <span class="grow"></span>
        <svg width="104" height="14" viewBox="0 0 104 14"><path d="M0 7.500h10M45.500 4.500h7v7h-7zM47.500 4.500v-2h7v7h-2M91 2l10 10M101 2 91 12" fill="none" stroke="#000"/></svg>
      </div>
      <div class="menubar">
        <span v-for="m in menus" :key="m[0]" class="mi" :class="{ on: m[0] === 'ベクタ(O)' }"><Txt :s="m[0]" :w="m[1]" :size="11.500" /></span>
      </div>
      <div v-for="(bar, bi) in bars" :key="bi" class="bar">
        <template v-for="(k, i) in bar" :key="i">
          <span v-if="k[0] === '|'" class="handle" :class="'h' + k[1]"><i></i></span>
          <span v-else-if="k[0] === '_'" class="gap"></span>
          <span v-else-if="k === 'v' || k === 'vg'" class="dd" :class="k"></span>
          <span v-else class="cell" :class="{ act: k[0] === '*' }"><svg width="24" height="24" viewBox="0 0 24 24" v-html="icons[k.replace('*', '')]"></svg></span>
        </template>
      </div>
      <div class="main">
        <div class="panel">
          <div class="ptitle"><Txt s="レイヤー" :w="33" :size="12" /><span class="grow"></span>
            <svg width="26" height="10" viewBox="0 0 26 10"><path d="M.5 3.500h5v5h-5zM3 3V.8h5.500V6H6" fill="none" stroke="#000" stroke-width="1.400"/><path d="M17 1l7.500 7.500M24.500 1 17 8.500" stroke="#000" stroke-width="1.600"/></svg>
          </div>
          <div class="ptools">
            <template v-for="(k, i) in panelIcons" :key="i">
              <span v-if="k === 'v'" class="dd pv"></span>
              <svg v-else width="16" height="16" viewBox="0 0 24 24" v-html="icons[k]"></svg>
            </template>
          </div>
          <div class="tree">
            <div class="rows">
              <div class="row"><svg class="exp" width="10" height="10" viewBox="0 0 10 10"><path d="M3 1l3.500 4L3 9" fill="none" stroke="#aaa" stroke-width="1.600"/></svg><span class="cb"></span><svg class="gi" width="16" height="16" viewBox="0 0 24 24" v-html="icons.group"></svg><Txt s="sub-group1" :w="51" :size="10.500" family='"DejaVu Sans", sans-serif' /></div>
              <div class="row"><svg class="exp" width="10" height="10" viewBox="0 0 10 10"><path d="M1 3l4 3.500L9 3" fill="none" stroke="#444" stroke-width="1.800"/></svg><span class="cb"><svg width="11" height="11" viewBox="0 0 11 11"><path d="M1.500 5.500l2.700 3 5.500-6.500" /></svg></span><svg class="gi" width="16" height="16" viewBox="0 0 24 24" v-html="icons.group"></svg><Txt s="group1" :w="30" :size="10.500" family='"DejaVu Sans", sans-serif' /></div>
              <div v-for="l in layers" :key="l.n" class="row leaf"><span class="cb"><svg width="11" height="11" viewBox="0 0 11 11"><path d="M1.500 5.500l2.700 3 5.500-6.500" /></svg></span><span class="sw" :style="{ background: l.c }"></span><Txt :s="l.n" :w="14" :size="10" :y="11" weight="700" family='"DejaVu Sans", sans-serif' /></div>
            </div>
            <div class="sb"><svg width="15" height="17" viewBox="0 0 15 17"><path d="M4 11l3.500-4L11 11" /></svg><i></i><span class="grow"></span><svg width="15" height="17" viewBox="0 0 15 17"><path d="M4 6l3.500 4L11 6" /></svg></div>
          </div>
        </div>
        <div class="canvas">
          <svg width="1620" height="903" viewBox="307 109 1620 903">
            <defs>
              <filter id="coast" filterUnits="userSpaceOnUse" x="640" y="280" width="1040" height="740" color-interpolation-filters="sRGB">
                <feTurbulence type="fractalNoise" baseFrequency=".11" numOctaves="1" seed="4" result="n" />
                <feDisplacementMap in="SourceGraphic" in2="n" scale="7" xChannelSelector="R" yChannelSelector="G" />
              </filter>
            </defs>
            <g filter="url(#coast)">
              <g v-for="(g, gi) in regions" :key="gi" :transform="g.t">
                <g v-for="r in g.list" :key="r.id">
                  <clipPath :id="r.id"><polygon :points="r.p" /></clipPath>
                  <polygon :points="r.p" :fill="r.c" />
                  <path :d="r.d" :clip-path="`url(#${r.id})`" fill="none" stroke="#33332e" stroke-width="1.700" />
                  <polygon :points="r.p" fill="none" stroke="#33332e" stroke-width="2.600" stroke-linejoin="round" />
                </g>
              </g>
            </g>
            <rect v-for="(p, i) in isl" :key="i" :x="p[0] - p[2] / 2" :y="p[1] - p[2] / 2" :width="p[2]" :height="p[2]" :fill="p[3] ? '#4d7050' : '#333'" />
          </svg>
        </div>
      </div>
      <div class="status">
        <div class="find"><svg width="14" height="14" viewBox="0 0 14 14"><circle cx="6" cy="6" r="4.500" fill="none" stroke="#888" stroke-width="1.300"/><path d="M9 9l4 4" stroke="#888" stroke-width="1.800"/></svg><Txt s="検索(Ctrl + K)" :w="68" :size="11.500" fill="#777" /></div>
        <span class="grow"></span>
        <Txt class="l1" s="座標" :w="21" :size="11" />
        <div class="fld f1"><Txt s="126.18,52.11" :w="60" :size="11" /></div>
        <svg class="i1" width="16" height="18" viewBox="0 0 24 24" v-html="icons.mouse"></svg>
        <Txt class="l2" s="縮尺" :w="21" :size="11" />
        <div class="fld f2"><Txt s="1:7546993" :w="49" :size="11" /><span class="grow"></span><svg width="9" height="6" viewBox="0 0 9 6"><path d="M.5 1l4 4 4-4" fill="none" stroke="#555" stroke-width="1.200"/></svg></div>
        <svg class="i2" width="14" height="17" viewBox="2 0 20 24" v-html="icons.lock"></svg>
        <Txt class="l3" s="拡大" :w="21" :size="11" />
        <div class="fld f3"><Txt s="100%" :w="26" :size="11" /><span class="grow"></span><span class="spin"><i></i><i class="dn"></i></span></div>
        <Txt class="l4" s="回転" :w="21" :size="11" />
        <div class="fld f4"><Txt s="0.0 °" :w="24" :size="11" /><span class="grow"></span><span class="spin"><i></i><i class="dn"></i></span></div>
        <span class="cb c1"><svg width="11" height="11" viewBox="0 0 11 11"><path d="M1.500 5.500l2.700 3 5.500-6.500" /></svg></span>
        <Txt s="レンダ" :w="22" :size="11" />
        <svg class="i3" width="15" height="15" viewBox="0 0 24 24" v-html="icons.globe"></svg>
        <Txt class="l5" s="EPSG:4326" :w="53" :size="11" />
        <svg class="i4" width="17" height="17" viewBox="0 0 24 24" v-html="icons.bubble"></svg>
      </div>
    </div>
    <div class="edge right"><i class="blk"></i><i class="a"></i><i class="b"></i><i class="w"></i><i class="c"></i><i class="d"></i><i class="e"></i><i class="f"></i></div>
    <div class="taskbar"><i class="t1"></i><i class="t2"></i><i class="t3"></i></div>

    <div class="menu m1">
      <div v-for="(m, i) in vectorMenu" :key="m[0]" class="item" :class="{ on: i === 0 }"><Txt :s="m[0]" :key2="m[1]" :w="m[2]" :size="11.500" /><span class="grow"></span><i class="tri"></i></div>
    </div>
    <div class="menu m2">
      <div v-for="(m, i) in geoMenu" :key="m[0]" class="item" :class="{ on: i === 4 }"><svg width="16" height="16" viewBox="0 0 24 24" v-html="icons[m[2]]"></svg><Txt :s="m[0]" :w="m[1]" :size="11.500" /></div>
    </div>
  </div>
</template>

<style>
body { margin: 0; overflow: hidden; }
</style>
<style scoped>
* { box-sizing: border-box; }
svg { display: block; flex: none; }
.desk { position: relative; width: 1936px; height: 1048px; background: #efefef; display: grid; grid-template-columns: 8px 1920px 8px; grid-template-rows: 1040px 8px; overflow: hidden; }
.win { display: flex; flex-direction: column; background: #efefef; }
.grow { flex: 1; }
.edge { display: flex; flex-direction: column; background: #efefef; }
.edge i { display: block; width: 8px; flex: none; }
.left .blk { height: 52px; background: #000; }
.left .a { height: 29px; background: #f6f6f6; border-bottom: 1px solid #bbb; }
.left .b { height: 68px; border-bottom: 1px solid #bbb; }
.left .thumb { margin-top: 407px; height: 216px; width: 6px; background: #cdcdcd; }
.left .c { margin-top: 264px; height: 4px; background: #0a0d14; }
.right .blk { height: 28px; background: #000; }
.right .a { height: 29px; background: #f3f3f3; border-bottom: 1px solid #aaa; }
.right .b { height: 68px; border-bottom: 1px solid #aaa; }
.right .w { height: 28px; background: #fff; border-bottom: 1px solid #aaa; }
.right .c { height: 62px; background: #ececec; border-bottom: 1px solid #aaa; }
.right .d { height: 84px; border-bottom: 1px solid #bbb; }
.right .e { height: 197px; border-bottom: 1px solid #aaa; }
.right .f { height: 58px; border-bottom: 1px solid #aaa; }
.taskbar { grid-column: 1 / 4; background: #070b13; display: flex; }
.taskbar i { display: block; }
.t1 { margin-left: 402px; width: 48px; background: #3b424c; }
.t2 { margin: 7px 0 0 1380px; width: 20px; border-top: 1px dashed #ddd; }
.t3 { margin-left: 71px; width: 1px; background: #555; }
.title { height: 22px; background: #fff; display: flex; align-items: center; padding: 0 17px 0 2px; }
.logo { margin-right: 5px; }
.title > svg:last-child { margin-bottom: 3px; }
.menubar { height: 18px; background: #fff; display: flex; padding: 0; border-bottom: 1px solid #f0f0f0; }
.mi { height: 17px; padding: 0 7px 1px; display: flex; align-items: center; }
.mi.on { background: #cce8ff; box-shadow: inset 0 0 0 1px #99d1ff; }
.bar { height: 34px; display: flex; align-items: stretch; border-bottom: 1px solid #b6b6b6; border-top: 1px solid #fff; }
.handle { flex: none; width: 9px; position: relative; padding: 3px 0 3px 4px; }
.handle.h1 { width: 13px; padding-left: 7px; }
.handle.h2 { width: 12px; padding-left: 5px; }
.handle.h3 { width: 13px; padding-left: 7px; }
.handle.h1::before, .handle.h2::before, .handle.h3::before { content: ''; position: absolute; left: 1px; top: -1px; bottom: -1px; width: 2px; background: #bbb; border-right: 1px solid #fff; }
.handle i { display: block; width: 2px; height: 26px; background: repeating-linear-gradient(#b4b4b4 0 2px, transparent 2px 4px); }
.gap { flex: none; width: 290px; }
.cell { flex: none; width: 31px; display: flex; align-items: center; justify-content: center; }
.cell.act { background: #c1dcf3; box-shadow: inset 0 0 0 1px #90c8f6; margin: 1px 0 2px; }
.dd { flex: none; width: 12px; display: flex; align-items: center; justify-content: center; }
.dd::after { content: ''; border: 4px solid transparent; border-bottom: 0; border-top-color: #222; }
.dd.vg::after { border-top-color: #888; }
.main { flex: 1; min-height: 0; display: flex; gap: 4px; }
.panel { width: 294px; display: flex; flex-direction: column; }
.ptitle { height: 19px; margin-top: 1px; background: #dadada; border: 1px solid #b4b4b4; display: flex; align-items: center; padding: 0 3px 0 4px; }
.ptools { height: 28px; display: flex; align-items: center; padding-left: 5px; gap: 7px; }
.pv { margin: 0 -4px; width: 11px; }
.tree { flex: 1; min-height: 0; border: 1px solid #828790; background: #fff; display: flex; overflow: hidden; }
.rows { flex: 1; }
.row { height: 20px; display: flex; align-items: center; }
.exp { margin: 0 9px 0 4px; }
.cb { flex: none; width: 13px; height: 13px; border: 1px solid #222; background: #fff; display: block; margin-top: 1px; }
.cb path { fill: none; stroke: #444; stroke-width: 1.2; }
.gi { margin: 0 6px 0 6px; }
.leaf { padding-left: 43px; }
.sw { width: 16px; height: 16px; margin: 0 5px 0 6px; border: 1px solid rgba(40, 40, 40, .6); }
.sb { width: 15px; margin-right: 1px; background: #f0f0f0; display: flex; flex-direction: column; }
.sb path { fill: none; stroke: #505050; stroke-width: 2; }
.sb i { height: 703px; background: #cdcdcd; }
.canvas { flex: 1; border: 1px solid #828790; background: #fff; overflow: hidden; }
.status { height: 27px; display: flex; align-items: center; padding: 0 7px 0 4px; }
.find { width: 200px; height: 20px; border: 1px solid #7a7a7a; background: #fff; display: flex; align-items: center; gap: 6px; padding-left: 8px; }
.fld { height: 20px; border: 1px solid #7a7a7a; background: #fff; display: flex; align-items: center; padding-left: 3px; margin-left: 4px; }
.f1 { width: 70px; }
.i1 { margin: 0 12px 0 4px; }
.f2 { width: 75px; padding-right: 4px; }
.i2 { margin: 0 14px 0 5px; }
.f3 { width: 80px; margin-right: 9px; }
.f4 { width: 78px; margin-left: 10px; margin-right: 6px; }
.spin { width: 15px; height: 18px; display: flex; flex-direction: column; }
.spin i { flex: 1; border: 1px solid #aaa; background: #f0f0f0; display: flex; align-items: center; justify-content: center; }
.spin i::after { content: ''; border: 3px solid transparent; border-top: 0; border-bottom-color: #000; }
.spin .dn::after { border: 3px solid transparent; border-bottom: 0; border-top-color: #000; }
.c1 { margin: 0 5px 0 0; }
.i3 { margin: 0 3px 0 20px; }
.i4 { margin-left: 16px; }
.menu { position: absolute; background: #f0f0f0; border: 1px solid #c6c6c6; box-shadow: 3px 3px 3px rgba(0, 0, 0, .5); padding: 2px; }
.m1 { left: 360px; top: 39px; width: 159px; height: 116px; }
.m2 { left: 512px; top: 42px; width: 169px; height: 204px; padding: 2px 3px 2px 2px; }
.item { height: 22px; display: flex; align-items: center; }
.item.on { background: #91c9f7; }
.m1 .item { padding: 0 12px 0 31px; }
.tri { border: 4px solid transparent; border-left-color: #000; border-right: 0; }
.m2 .item { padding-left: 4px; gap: 11px; }
</style>
